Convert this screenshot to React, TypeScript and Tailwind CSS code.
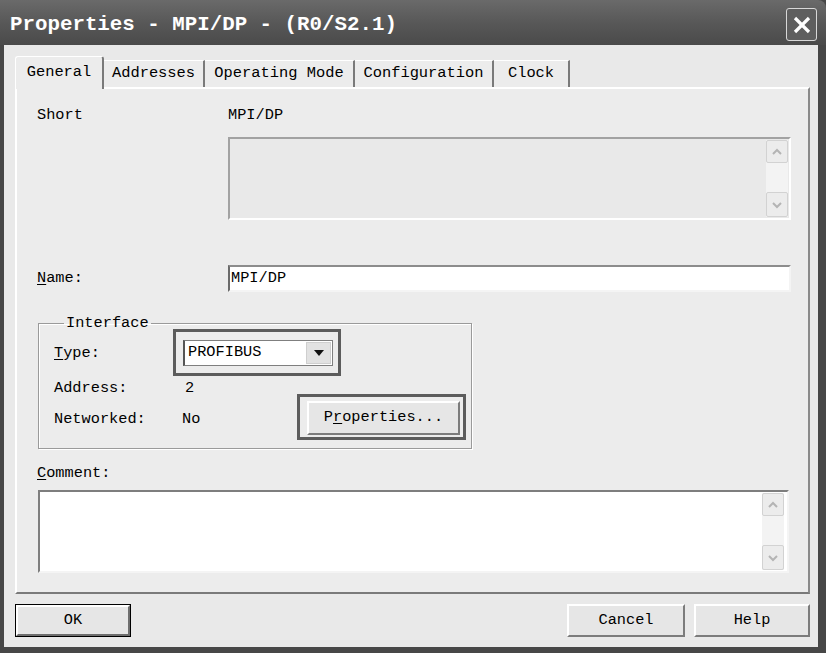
import React from "react";

const mono = "font-['Liberation_Mono','DejaVu_Sans_Mono',monospace]";

const Chevron = ({ up }: { up?: boolean }) => (
  <svg width="12" height="8" viewBox="0 0 12 8">
    <polyline
      points={up ? "2,6 6,2 10,6" : "2,2 6,6 10,2"}
      fill="none"
      stroke="#b4b4b4"
      strokeWidth="2"
    />
  </svg>
);

const ScrollBar = () => (
  <div className="flex flex-col justify-between w-[22px] bg-[#f3f3f3]">
    <div className="h-[23px] flex items-center justify-center border border-[#d2d2d2] rounded-[2px] bg-[#ececec]">
      <Chevron up />
    </div>
    <div className="h-[25px] flex items-center justify-center border border-[#d2d2d2] rounded-[2px] bg-[#ececec]">
      <Chevron />
    </div>
  </div>
);

const Tab = ({ label, w }: { label: string; w: string }) => (
  <div
    className={`${w} h-[27px] flex items-center justify-center border-t border-t-white border-r-2 border-r-[#7a7a7a] bg-[#ececec] text-[15.4px] leading-none text-black`}
  >
    {label}
  </div>
);

export default function App() {
  return (
    <div className={`w-[826px] h-[653px] bg-[#474747] flex flex-col ${mono}`}>
      {/* title bar */}
      <div className="h-[45px] flex items-center justify-between pl-[10px] pr-[9px] bg-gradient-to-b from-[#6a6a6a] via-[#585858] to-[#4a4a4a] rounded-tr-[8px]">
        <span className="text-white font-bold text-[20.8px] leading-none mt-[5px]">
          Properties - MPI/DP - (R0/S2.1)
        </span>
        <div className="w-[31px] h-[33px] mt-[4px] border border-[#d8d8d8] rounded-[3px] bg-[#5e5e5e] flex items-center justify-center">
          <svg width="20" height="20" viewBox="0 0 20 20">
            <line x1="3" y1="3" x2="17" y2="17" stroke="white" strokeWidth="3.2" />
            <line x1="17" y1="3" x2="3" y2="17" stroke="white" strokeWidth="3.2" />
          </svg>
        </div>
      </div>

      {/* client */}
      <div className="flex-1 ml-[4px] mr-[8px] mb-[6px] bg-[#e9e9e9] pl-[11px] pr-[8px] pt-[11px] flex flex-col text-black">
        {/* tabs */}
        <div className="h-[31px] flex items-end">
          <div className="relative z-10 w-[89px] h-[33px] -mb-[2px] flex items-start justify-center pt-[8px] border-t border-l border-white border-r-2 border-r-[#7a7a7a] rounded-t-[3px] bg-[#ececec] text-[15.4px] leading-none">
            General
          </div>
          <Tab label="Addresses" w="w-[101px]" />
          <Tab label="Operating Mode" w="w-[150px]" />
          <Tab label="Configuration" w="w-[139px]" />
          <Tab label="Clock" w="w-[76px]" />
        </div>

        {/* panel */}
        <div className="h-[507px] border-2 border-t-white border-l-white border-r-[#8a8a8a] border-b-[#7a7a7a] bg-[#ececec] pl-[20px] pt-[17px] flex flex-col text-[15.3px]">
          <div className="flex h-[20px] items-center leading-none">
            <span className="w-[191px]">Short</span>
            <span>MPI/DP</span>
          </div>

          <div className="ml-[191px] mt-[11px] w-[563px] h-[83px] border-2 border-t-[#a2a2a2] border-l-[#a2a2a2] border-b-white border-r-white bg-[#e9e9e9] flex justify-end pr-[1px] py-[1px]">
            <ScrollBar />
          </div>

          <div className="flex items-center mt-[45px] h-[27px] leading-none">
            <span className="w-[191px]">
              <span className="underline underline-offset-2">N</span>ame:
            </span>
            <div className="w-[563px] h-[27px] border-2 border-t-[#8c8c8c] border-l-[#6a6a6a] border-b-[#f4f4f4] border-r-[#f4f4f4] bg-white flex items-center pl-[1px]">
              MPI/DP
            </div>
          </div>

          {/* interface group */}
          <fieldset className="ml-[1px] mt-[21px] w-[434px] h-[136px] border border-[#9a9a9a] shadow-[inset_1px_1px_0_#ffffff,1px_1px_0_#ffffff] pl-[15px] pb-[8px]">
            <legend className="ml-[10px] px-[2px] leading-[20px]">Interface</legend>
            <div className="flex items-center -mt-[4px] h-[47px]">
              <span className="w-[119px] leading-none mt-[2px]">
                <span className="underline underline-offset-2">T</span>ype:
              </span>
              <div className="w-[168px] h-[47px] border-[3px] border-[#5c5c5c] pl-[7px] pt-[8px]">
                <div className="w-[150px] h-[26px] border border-[#7f7f7f] border-l-2 border-l-[#555] bg-white flex items-center justify-between pl-[3px] pr-[1px]">
                  <span className="leading-none">PROFIBUS</span>
                  <div className="w-[25px] h-[22px] bg-[#e2e2e2] border border-[#cfcfcf] flex items-center justify-center">
                    <svg width="10" height="6" viewBox="0 0 10 6">
                      <polygon points="0,0 10,0 5,6" fill="#111" />
                    </svg>
                  </div>
                </div>
              </div>
            </div>
            <div className="flex items-start">
              <div className="w-[243px] flex flex-col mt-[2px] leading-[20px]">
                <div className="flex">
                  <span className="w-[131px]">Address:</span>
                  <span>2</span>
                </div>
                <div className="flex mt-[11px]">
                  <span className="w-[128px]">Networked:</span>
                  <span>No</span>
                </div>
              </div>
              <div className="mt-[18px] w-[169px] h-[46px] border-[3px] border-[#5c5c5c] pl-[7px] pt-[4px]">
                <div className="w-[153px] h-[34px] border-2 border-t-white border-l-white border-r-[#7c7c7c] border-b-[#7c7c7c] bg-[#e6e6e6] flex items-center justify-center leading-none">
                  <span>
                    P<span className="underline underline-offset-2">r</span>operties...
                  </span>
                </div>
              </div>
            </div>
          </fieldset>

          <div className="mt-[15px] h-[20px] flex items-center leading-none">
            <span>
              <span className="underline underline-offset-2">C</span>omment:
            </span>
          </div>

          <div className="ml-[1px] mt-[6px] w-[751px] h-[83px] border-2 border-t-[#7e7e7e] border-l-[#7e7e7e] border-b-[#f4f4f4] border-r-[#f4f4f4] bg-white flex justify-end pr-[3px] py-[1px]">
            <ScrollBar />
          </div>
        </div>

        {/* buttons */}
        <div className="mt-[10px] flex items-center text-[15.3px] leading-none">
          <div className="w-[116px] h-[33px] border border-black flex">
            <div className="flex-1 border-2 border-t-white border-l-white border-r-[#6e6e6e] border-b-[#6e6e6e] bg-[#e6e6e6] flex items-center justify-center">
              OK
            </div>
          </div>
          <div className="flex-1" />
          <div className="w-[118px] h-[33px] border-2 border-t-white border-l-white border-r-[#7c7c7c] border-b-[#7c7c7c] bg-[#e6e6e6] flex items-center justify-center">
            Cancel
          </div>
          <div className="ml-[9px] w-[116px] h-[33px] border-2 border-t-white border-l-white border-r-[#7c7c7c] border-b-[#7c7c7c] bg-[#e6e6e6] flex items-center justify-center">
            Help
          </div>
        </div>
      </div>
    </div>
  );
}
